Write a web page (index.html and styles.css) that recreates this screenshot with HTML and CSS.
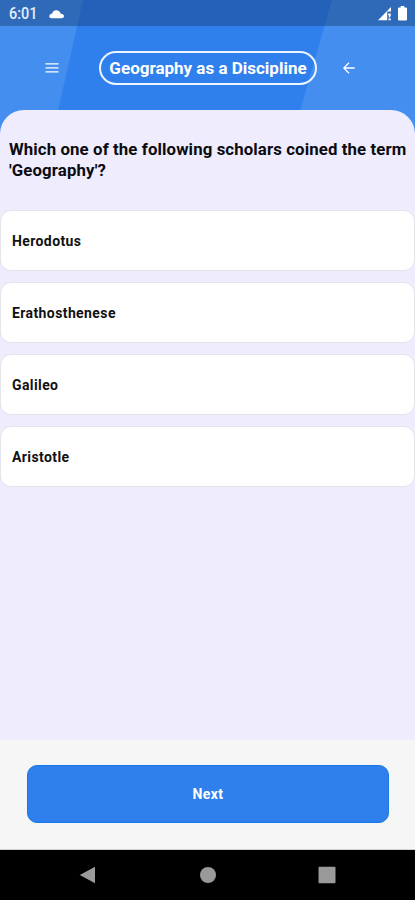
FILE: index.html
```html
<!DOCTYPE html>
<html lang="en">
<head>
<meta charset="utf-8">
<title>Geography as a Discipline</title>
<link rel="stylesheet" href="styles.css">
</head>
<body>
<div class="screen">
  <div class="hero">
    <svg class="hero-bg" viewBox="0 0 415 142" aria-hidden="true">
      <path class="band" d="M0 0H83L51 142H0ZM332 0H415V142H291Z"/>
    </svg>
    <div class="status">
      <span class="time">6:01</span>
      <svg class="cloud" width="16" height="10" viewBox="0 0 16 10"><path d="M2.6 9.2Q.2 9 .2 7.2Q.3 5.2 3 4.6Q4.3 1.2 7.2 1.2Q10.3 1.2 11.6 4.4Q15 5 15 7.2Q14.9 9.2 12.6 9.2Z"/></svg>
      <span class="spacer"></span>
      <svg class="signal" width="14" height="14" viewBox="0 0 14 14"><path d="M0 13.2L13 0V4.5H9.2V13.2Z"/><path d="M10.2 6.5H12.8V9L11.6 10.6H10.4L11.4 8.4H10.2ZM10.5 11.6H12.8V13.2H10.5Z"/></svg>
      <svg class="battery" width="9" height="15" viewBox="0 0 9 15"><path d="M2.7 0H6.3V1.5H8Q9 1.5 9 2.5V13.5Q9 14.5 8 14.5H1Q0 14.5 0 13.5V2.5Q0 1.5 1 1.5H2.7Z"/></svg>
    </div>
    <header class="bar">
      <svg class="menu" width="14" height="10" viewBox="0 0 14 10"><path d="M.5 .9H13.5M.5 4.9H13.5M.5 8.9H13.5"/></svg>
      <h1 class="title">Geography as a Discipline</h1>
      <svg class="back" width="12" height="12" viewBox="0 0 12 12"><path d="M11.7 6H1M6 .8L.8 6L6 11.2"/></svg>
    </header>
  </div>
  <main class="sheet">
    <p class="question">Which one of the following scholars coined the term 'Geography'?</p>
    <ul class="options">
      <li class="option"><span>Herodotus</span></li>
      <li class="option"><span>Erathosthenese</span></li>
      <li class="option"><span>Galileo</span></li>
      <li class="option"><span>Aristotle</span></li>
    </ul>
  </main>
  <footer class="footer"><button class="next">Next</button></footer>
  <nav class="nav">
    <svg width="18" height="18" viewBox="0 0 18 18"><path d="M.8 9L16 .7V17.3Z"/></svg>
    <svg width="18" height="18" viewBox="0 0 18 18"><circle cx="9" cy="9" r="8"/></svg>
    <svg width="18" height="18" viewBox="0 0 18 18"><rect x=".5" y=".7" width="17" height="16.6" rx="1"/></svg>
  </nav>
</div>
</body>
</html>
```
FILE: styles.css
```css
* { box-sizing: border-box; }
body { margin: 0; font-family: Roboto, sans-serif; }
.screen {
  width: 415px;
  height: 900px;
  display: flex;
  flex-direction: column;
  overflow: hidden;
}
.hero {
  position: relative;
  height: 142px;
  flex: none;
  background: #2f80ed;
}
.hero-bg { position: absolute; inset: 0; width: 415px; height: 142px; }
.band { fill: #438eef; }
.status {
  position: relative;
  height: 26px;
  display: flex;
  align-items: center;
  padding: 1px 8px 0 9px;
  background: rgba(17, 52, 105, .4);
  color: #e6eefa;
}
.time { font-size: 16px; font-weight: 500; line-height: 24px; width: 40px; white-space: nowrap; transform: scaleX(.9); transform-origin: left; }
.status svg { fill: #fff; }
.spacer { flex: 1; }
.signal { margin-right: 6px; }
.bar {
  position: relative;
  display: flex;
  align-items: center;
  height: 84px;
  padding-left: 45px;
}
.menu, .back { fill: none; stroke: #fff; stroke-width: 1.3; }
.menu { margin-right: 40px; }
.back { margin-left: 26px; }
.title {
  margin: 0;
  width: 218px;
  height: 34px;
  border: 2px solid #eef5ff;
  border-radius: 17px;
  color: #fff;
  font-size: 17px;
  font-weight: 700;
  line-height: 30px;
  text-align: center;
  white-space: nowrap;
}
.sheet {
  position: relative;
  flex: 1;
  margin-top: -32px;
  padding-top: 29px;
  border-radius: 24px 24px 0 0;
  background: #efecfd;
}
.question {
  margin: 0;
  padding: 0 0 0 9px;
  height: 71px;
  color: #0b0b10;
  font-size: 16.8px;
  font-weight: 700;
  letter-spacing: .11px;
  line-height: 21px;
}
.options {
  list-style: none;
  margin: 0;
  padding: 0;
  display: grid;
  gap: 11px;
}
.option {
  display: flex;
  align-items: center;
  height: 61px;
  padding: 0 11px;
  border: 1px solid #e5e4ea;
  border-radius: 11px;
  background: #fff;
  color: #111;
  font-size: 14px;
  font-weight: 700;
  letter-spacing: .4px;
}
.footer {
  height: 110px;
  flex: none;
  padding: 25px 26px 0 27px;
  border-bottom: 1px solid #d2d2d2;
  background: #f6f6f6;
}
.next {
  display: block;
  width: 100%;
  height: 58px;
  padding: 0;
  border: 1px solid #1878e6;
  border-radius: 10px;
  background: #2f80ed;
  color: #fff;
  font: 700 14px Roboto, sans-serif;
  letter-spacing: .4px;
}
.nav {
  height: 50px;
  flex: none;
  display: flex;
  align-items: center;
  justify-content: space-between;
  padding: 0 79px;
  background: #000;
}
.nav svg { fill: #9a9a9a; }
```
